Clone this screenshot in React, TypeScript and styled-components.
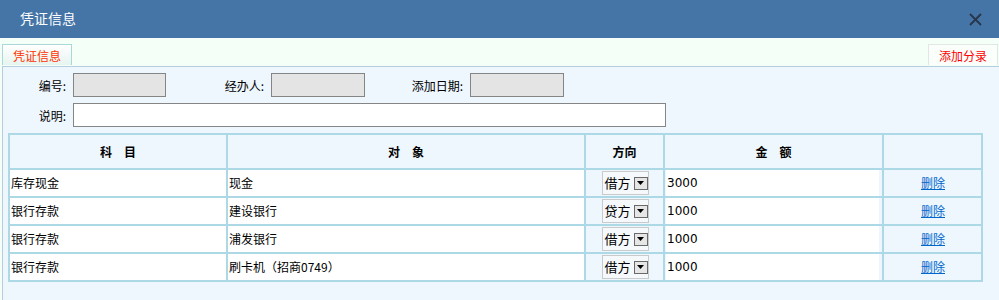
import React from 'react'
import styled, { createGlobalStyle } from 'styled-components'

const GlobalStyle = createGlobalStyle`
  body {
    margin: 0;
    background: #f4fff8;
    font-family: "Noto Sans CJK SC", "DejaVu Sans", sans-serif;
    font-size: 12px;
    color: #000;
  }
`

const rows = [
  { subject: '库存现金', target: '现金', dir: '借方', amount: '3000' },
  { subject: '银行存款', target: '建设银行', dir: '贷方', amount: '1000' },
  { subject: '银行存款', target: '浦发银行', dir: '借方', amount: '1000' },
  { subject: '银行存款', target: '刷卡机（招商0749）', dir: '借方', amount: '1000' },
]

export default function App() {
  return (
    <Dialog>
      <GlobalStyle />
      <TitleBar>
        <Title>凭证信息</Title>
        <CloseButton>
          <svg width="13" height="13" viewBox="0 0 13 13">
            <path d="M1 1 L12 12 M12 1 L1 12" stroke="#28354a" strokeWidth="1.8" />
          </svg>
        </CloseButton>
      </TitleBar>
      <TabBar>
        <Tab $active>凭证信息</Tab>
        <Tab>添加分录</Tab>
      </TabBar>
      <Panel>
        <FormRow>
          <FieldLabel $width={63}>编号:</FieldLabel>
          <TextBox $width={93} $disabled />
          <FieldLabel $width={98}>经办人:</FieldLabel>
          <TextBox $width={94} $disabled />
          <FieldLabel $width={98}>添加日期:</FieldLabel>
          <TextBox $width={94} $disabled />
        </FormRow>
        <FormRow>
          <FieldLabel $width={63}>说明:</FieldLabel>
          <TextBox $width={593} />
        </FormRow>
        <Grid>
          <colgroup>
            <col style={{ width: 218 }} />
            <col style={{ width: 358 }} />
            <col style={{ width: 79 }} />
            <col style={{ width: 219 }} />
            <col style={{ width: 99 }} />
          </colgroup>
          <thead>
            <tr>
              <Head>科　目</Head>
              <Head>对　象</Head>
              <Head>方向</Head>
              <Head>金　额</Head>
              <Head />
            </tr>
          </thead>
          <tbody>
            {rows.map((r, i) => (
              <tr key={i}>
                <Cell>{r.subject}</Cell>
                <Cell>{r.target}</Cell>
                <Cell $tinted $center>
                  <Select>
                    <span>{r.dir}</span>
                    <DropButton>
                      <svg width="7" height="4" viewBox="0 0 7 4">
                        <path d="M0 0 H7 L3.5 4 Z" fill="#000" />
                      </svg>
                    </DropButton>
                  </Select>
                </Cell>
                <Cell $tinted>
                  <Amount>{r.amount}</Amount>
                </Cell>
                <Cell $tinted $center>
                  <DeleteLink href="#">删除</DeleteLink>
                </Cell>
              </tr>
            ))}
          </tbody>
        </Grid>
      </Panel>
    </Dialog>
  )
}

const Dialog = styled.div`
  width: 999px;
  height: 300px;
  overflow: hidden;
`

const TitleBar = styled.div`
  height: 38px;
  background: #4475a6;
  display: flex;
  align-items: center;
  justify-content: space-between;
  padding: 0 17px 0 20px;
`

const Title = styled.div`
  color: #fff;
  font-size: 14px;
  margin-top: -2px;
`

const CloseButton = styled.div`
  display: flex;
  margin-top: 1px;
`

const TabBar = styled.div`
  height: 28px;
  display: flex;
  align-items: flex-end;
  justify-content: space-between;
  padding: 0 1px 0 2px;
`

const Tab = styled.div<{ $active?: boolean }>`
  width: 70px;
  height: 21px;
  box-sizing: border-box;
  border: 1px solid ${p => (p.$active ? '#a8d8d8' : '#e2e6e4')};
  border-bottom: none;
  background: ${p => (p.$active ? 'linear-gradient(#ffffff, #e6f4f0)' : '#fbfffc')};
  color: ${p => (p.$active ? '#ff3300' : '#ff0000')};
  font-size: 12px;
  text-align: center;
  line-height: 22px;
  margin-bottom: 1px;
`

const Panel = styled.div`
  margin-left: 2px;
  height: 240px;
  background: #eef6fe;
  border-top: 1px solid #b4cee0;
  border-left: 1px solid #b4cee0;
  padding-top: 6px;
`

const FormRow = styled.div`
  display: flex;
  align-items: center;
  height: 24px;
  margin-bottom: 6px;
`

const FieldLabel = styled.div<{ $width: number }>`
  width: ${p => p.$width}px;
  text-align: right;
  margin-right: 7px;
  font-size: 12px;
`

const TextBox = styled.div<{ $width: number; $disabled?: boolean }>`
  width: ${p => p.$width}px;
  height: 24px;
  box-sizing: border-box;
  border: 1px solid #858585;
  background: ${p => (p.$disabled ? '#e4e4e4' : '#ffffff')};
`

const Grid = styled.table`
  margin-left: 5px;
  width: 973px;
  table-layout: fixed;
  border-collapse: collapse;
  border: 2px solid #add8e6;
`

const Head = styled.th`
  height: 33px;
  border: 2px solid #add8e6;
  background: #eef6fe;
  font-weight: bold;
  font-size: 12px;
  padding: 0;
  text-align: center;
`

const Cell = styled.td<{ $tinted?: boolean; $center?: boolean }>`
  height: 26px;
  border: 2px solid #add8e6;
  background: ${p => (p.$tinted ? '#eef6fe' : '#ffffff')};
  text-align: ${p => (p.$center ? 'center' : 'left')};
  padding: 0 0 0 1px;
  font-size: 12px;
  line-height: 14px;
  white-space: nowrap;
`

const Amount = styled.div`
  background: #fff;
  height: 26px;
  line-height: 26px;
  margin-right: 3px;
  padding-left: 1px;
  font-family: "DejaVu Sans", sans-serif;
  font-size: 12px;
`

const Select = styled.div`
  display: inline-flex;
  align-items: center;
  gap: 3px;
  height: 24px;
  width: 47px;
  box-sizing: border-box;
  border: 1px solid #cacaca;
  background: #f6f9fc;
  padding-left: 2px;
  font-size: 13px;
  vertical-align: middle;
`

const DropButton = styled.span`
  width: 14px;
  height: 13px;
  box-sizing: border-box;
  border: 1px solid #6a6a6a;
  background: #e6e6e6;
  display: flex;
  align-items: center;
  justify-content: center;
`

const DeleteLink = styled.a`
  color: #0066cc;
  text-decoration: underline;
  font-size: 12px;
`
